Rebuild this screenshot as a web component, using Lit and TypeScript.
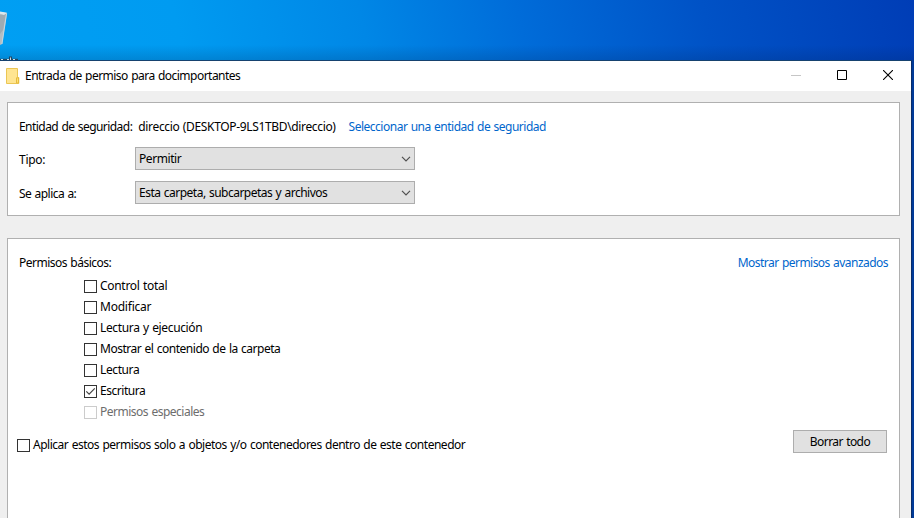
import { LitElement, html, css, svg, nothing } from "lit";
import { customElement, property } from "lit/decorators.js";

/* Single-line label whose tracking is computed so that it spans a given width. */
@customElement("ui-label")
class UiLabel extends LitElement {
  @property({ type: Number }) span = 0;
  @property() text = "";
  static styles = css`
    :host { display: block; white-space: pre; line-height: 16px; height: 16px; }
    .text { display: inline-block; word-spacing: .7px; }
  `;
  firstUpdated() {
    const el = this.renderRoot.querySelector<HTMLElement>(".text")!;
    const natural = el.getBoundingClientRect().width;
    if (this.span) el.style.letterSpacing = `${(this.span + 0.3 - natural) / this.text.length}px`;
  }
  render() {
    return html`<span class="text">${this.text}</span>`;
  }
}

@customElement("ui-select")
class UiSelect extends LitElement {
  @property() text = "";
  @property({ type: Number }) span = 0;
  static styles = css`
    :host {
      display: flex; align-items: center; justify-content: space-between;
      box-sizing: border-box; width: 280px; height: 23px; padding: 0 3px 0 3px;
      background: #e1e1e1; border: 1px solid #adadad;
    }
    svg { display: block; }
  `;
  render() {
    return html`<ui-label .text=${this.text} .span=${this.span}></ui-label>
      <svg width="10" height="6" viewBox="0 0 10 6"><path d="M1 .8 5 4.8 9 .8" fill="none" stroke="#505050" stroke-width="1.2"/></svg>`;
  }
}

@customElement("ui-check")
class UiCheck extends LitElement {
  @property() text = "";
  @property({ type: Number }) span = 0;
  @property({ type: Boolean, reflect: true }) checked = false;
  @property({ type: Boolean, reflect: true }) disabled = false;
  static styles = css`
    :host { display: flex; align-items: center; gap: 3px; height: 21px; }
    .box { box-sizing: border-box; width: 13px; height: 13px; border: 1px solid #333; background: #fff; }
    svg { display: block; }
    ui-label { margin-top: -1px; }
    :host([disabled]) { color: #6d6d6d; }
    :host([disabled]) .box { border-color: #ccc; }
  `;
  render() {
    return html`<div class="box">${this.checked
        ? html`<svg width="11" height="11" viewBox="0 0 11 11">${svg`<path d="M1.3 5.3 4.1 8.1 9.8 2.4" fill="none" stroke="#444" stroke-width="1.2"/>`}</svg>`
        : nothing}</div>
      <ui-label .text=${this.text} .span=${this.span}></ui-label>`;
  }
}

const permissions = [
  { text: "Control total", span: 67 },
  { text: "Modificar", span: 51 },
  { text: "Lectura y ejecución", span: 102 },
  { text: "Mostrar el contenido de la carpeta", span: 180 },
  { text: "Lectura", span: 39 },
  { text: "Escritura", span: 45, checked: true },
  { text: "Permisos especiales", span: 104, disabled: true },
];

@customElement("app-root")
class AppRoot extends LitElement {
  static styles = css`
    :host {
      display: block; position: relative; width: 914px; height: 518px; overflow: hidden;
      font: 12px "Noto Sans", "Open Sans", sans-serif; color: #000; background: #003a98;
    }
    .desktop {
      height: 60px;
      background:
        linear-gradient(180deg, transparent 75%, rgba(0, 30, 80, .18) 100%),
        linear-gradient(76deg, #009ff3 0%, #009bf1 20%, #0087e6 40%, #006cd9 57%, #0052c6 77%, #003db6 100%);
    }
    .bin { position: absolute; left: 0; top: 10px; }
    .window {
      box-sizing: border-box; width: 912px; height: 458px; background: #efefef;
      border-top: 1px solid #16426f; border-right: 1px solid #082c69;
    }
    .titlebar { display: flex; align-items: center; height: 30px; background: #fff; padding-left: 6px; }
    .titlebar ui-label { margin-left: 5px; flex: 1; }
    .titlebar svg { display: block; }
    .caption { display: flex; align-items: center; justify-content: center; width: 46px; height: 30px; }
    .caption svg { margin-top: -2px; }
    .group { box-sizing: border-box; width: 893px; margin-left: 7px; background: #fff; border: 1px solid #b0b0b0; }
    .principal { margin-top: 11px; height: 114px; padding: 16px 11px 0; }
    .row { display: flex; }
    .link { color: #0066cc; }
    .field { width: 116px; }
    .who { margin-left: 6px; }
    .select-link { margin-left: 13px; }
    .type { margin-top: 12px; }
    .type .field { padding-top: 5px; }
    .scope { margin-top: 11px; }
    .scope .field { padding-top: 5px; }
    .basic { margin-top: 22px; height: 290px; padding: 16px 11px 0; }
    .heading { justify-content: space-between; }
    .checks { margin: 5px 0 0 65px; }
    .footer { display: flex; justify-content: space-between; margin: 7px 1px 0 -2px; }
    .footer ui-check { margin-top: 5px; }
    .button {
      display: flex; align-items: center; justify-content: center; box-sizing: border-box;
      width: 94px; height: 23px; background: #e1e1e1; border: 1px solid #adadad;
    }
  `;
  render() {
    return html`
      <div class="desktop">
        <svg class="bin" width="20" height="50" viewBox="0 0 20 50">
          <path d="M0 2 7 3 2.2 34 0 35Z" fill="#b3bdc3"/>
          <path d="M0 5 6 4 3 20 0 24Z" fill="#9eabb3"/>
          <path d="M0 1.5 7 2.8 4 5 0 3.8Z" fill="#dce7ec"/>
          <path d="M6.6 3.5 2 34" stroke="#d3dee3" stroke-width=".8"/>
          <path d="M0 49.5h18" stroke="#24455f" stroke-width="1.4"/>
          <path d="M10.5 46.5V50" stroke="#24455f" stroke-width="3"/>
          <path d="M10.5 47.5V50M1 49.5h2M7 49.5h2M13 49.5h2" stroke="#c4dce6"/>
        </svg>
      </div>
      <div class="window">
        <div class="titlebar">
          <svg width="14" height="16" viewBox="0 0 14 16">
            <path d="M.5.5h11v9h1.3v6H.5Z" fill="#ffe591" stroke="#ebc654"/>
            <path d="M10.5 15V9.8h2V15Z" fill="#ffdf77" stroke="#e5bb3c"/>
          </svg>
          <ui-label .text=${"Entrada de permiso para docimportantes"} .span=${215}></ui-label>
          <div class="caption"><svg width="10" height="10"><path d="M0 5.5h10" stroke="#c6c6c6"/></svg></div>
          <div class="caption"><svg width="10" height="10"><path d="M.5.5h9v9h-9Z" fill="none" stroke="#000"/></svg></div>
          <div class="caption"><svg width="10" height="10"><path d="M0 0 10 10M10 0 0 10" stroke="#000" stroke-width="1.1"/></svg></div>
        </div>
        <div class="group principal">
          <div class="row">
            <ui-label .text=${"Entidad de seguridad:"} .span=${113}></ui-label>
            <ui-label class="who" .text=${"direccio (DESKTOP-9LS1TBD\\direccio)"} .span=${197}></ui-label>
            <ui-label class="link select-link" .text=${"Seleccionar una entidad de seguridad"} .span=${197}></ui-label>
          </div>
          <div class="row type">
            <div class="field"><ui-label .text=${"Tipo:"} .span=${26}></ui-label></div>
            <ui-select .text=${"Permitir"} .span=${42}></ui-select>
          </div>
          <div class="row scope">
            <div class="field"><ui-label .text=${"Se aplica a:"} .span=${57}></ui-label></div>
            <ui-select .text=${"Esta carpeta, subcarpetas y archivos"} .span=${188}></ui-select>
          </div>
        </div>
        <div class="group basic">
          <div class="row heading">
            <ui-label .text=${"Permisos básicos:"} .span=${92}></ui-label>
            <ui-label class="link" .text=${"Mostrar permisos avanzados"} .span=${150}></ui-label>
          </div>
          <div class="checks">
            ${permissions.map((p) => html`<ui-check .text=${p.text} .span=${p.span} ?checked=${p.checked} ?disabled=${p.disabled}></ui-check>`)}
          </div>
          <div class="footer">
            <ui-check .text=${"Aplicar estos permisos solo a objetos y/o contenedores dentro de este contenedor"} .span=${432}></ui-check>
            <div class="button"><ui-label .text=${"Borrar todo"} .span=${60}></ui-label></div>
          </div>
        </div>
      </div>`;
  }
}
